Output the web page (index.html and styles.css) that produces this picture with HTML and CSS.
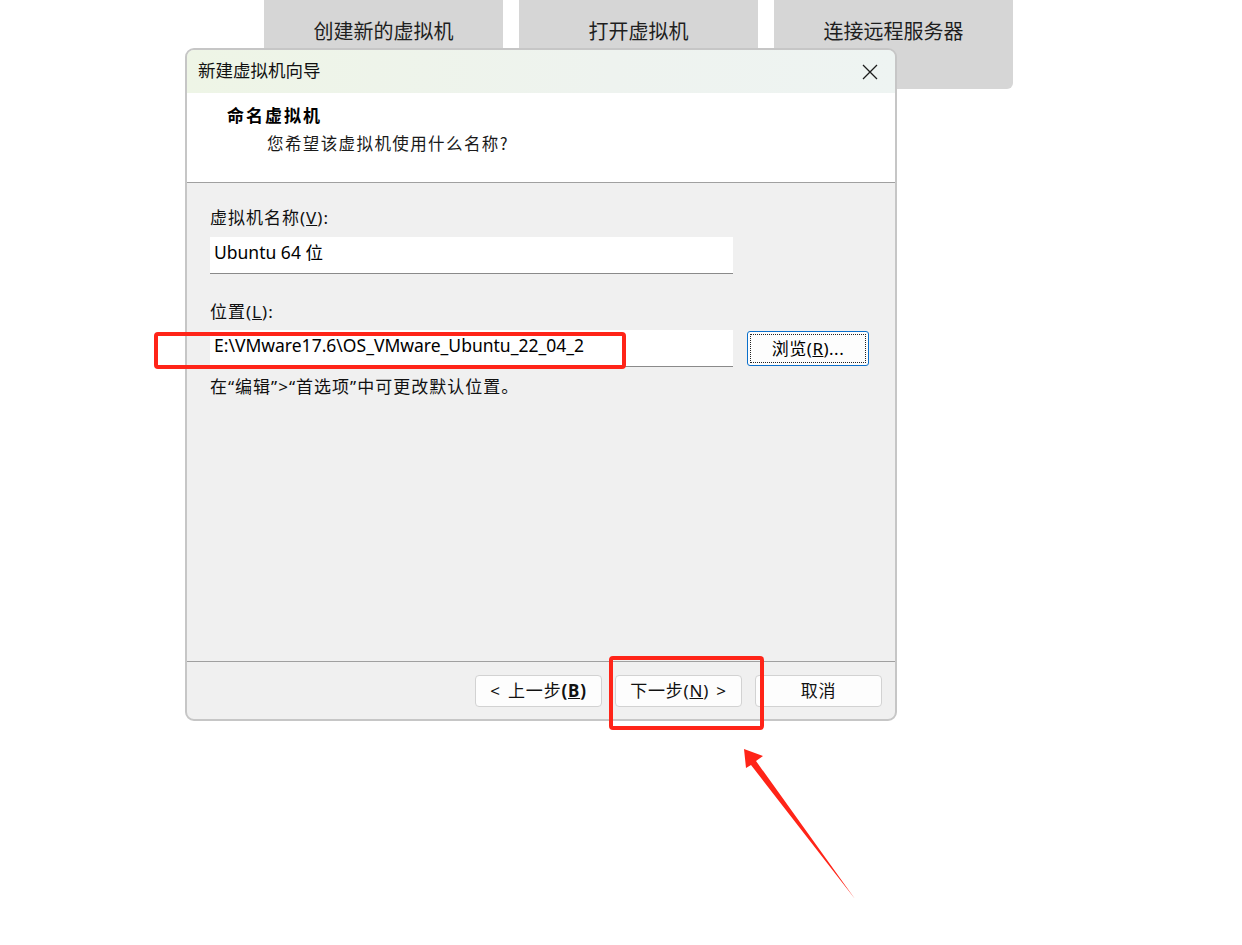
FILE: index.html
```html
<!DOCTYPE html>
<html>
  <head>
    <title>新建虚拟机向导</title>
    <link rel="stylesheet" href="styles.css">
  </head>
  <body>
    <div class="tiles">
      <div class="tile">创建新的虚拟机</div>
      <div class="tile">打开虚拟机</div>
      <div class="tile">连接远程服务器</div>
    </div>

    <div class="dialog">
      <div class="titlebar">
        <span class="title">新建虚拟机向导</span>
        <svg class="close" width="16" height="16" viewBox="0 0 16 16">
          <path d="M1 1 L15 15 M15 1 L1 15" stroke="#1c1c1c" stroke-width="1.3" fill="none"/>
        </svg>
      </div>

      <div class="head">
        <div class="head-title">命名虚拟机</div>
        <div class="head-sub">您希望该虚拟机使用什么名称?</div>
      </div>

      <div class="body">
        <div class="label">虚拟机名称(<u>V</u>):</div>
        <div class="field">Ubuntu 64 位</div>

        <div class="label second">位置(<u>L</u>):</div>
        <div class="row">
          <div class="field">E:\VMware17.6\OS_VMware_Ubuntu_22_04_2</div>
          <div class="browse"><span class="focus">浏览(<u>R</u>)...</span></div>
        </div>
        <div class="hint">在“编辑”&gt;“首选项”中可更改默认位置。</div>
      </div>

      <div class="footer">
        <div class="btn">&lt; 上一步<b>(<u>B</u>)</b></div>
        <div class="btn">下一步(<u>N</u>) &gt;</div>
        <div class="btn">取消</div>
      </div>
    </div>

    <!-- annotations drawn over the screenshot -->
    <div class="mark mark-path"></div>
    <div class="mark mark-next"></div>
    <svg class="arrow" width="1242" height="945" viewBox="0 0 1242 945">
      <polygon points="744,749 763,756 756,761 855,899 751,765 746,768" fill="#ff2418"/>
    </svg>
  </body>
</html>
```

FILE: styles.css
```css
body{
  margin: 0;
  background-color: #ffffff;
  font-family: "Noto Sans CJK SC", "Noto Sans", sans-serif;
  color: #000000;
  position: relative;
  height: 945px;
  overflow: hidden;
}

.tiles{
  display: flex;
  gap: 16px;
  padding-left: 264px;
}
.tile{
  width: 239px;
  height: 89px;
  background-color: #d6d6d6;
  border-radius: 0 0 6px 6px;
  box-sizing: border-box;
  padding-top: 17px;
  text-align: center;
  font-size: 20px;
  line-height: 28px;
  color: #1e1e1e;
}

.dialog{
  position: relative;
  margin-top: -41px;
  margin-left: 185px;
  width: 712px;
  height: 673px;
  box-sizing: border-box;
  border: 2px solid #c6c6c6;
  border-radius: 9px;
  background-color: #f0f0f0;
  overflow: hidden;
  display: flex;
  flex-direction: column;
}

.titlebar{
  height: 43px;
  box-sizing: border-box;
  display: flex;
  align-items: center;
  justify-content: space-between;
  padding: 0 17px 3px 11px;
  background: linear-gradient(to right, #eef5e6, #eef3ef 60%, #eef4f2);
}
.title{
  font-size: 17.5px;
  line-height: 24px;
  color: #111;
}
.close{
  margin-top: 3px;
}

.head{
  height: 90px;
  box-sizing: border-box;
  background-color: #ffffff;
  border-bottom: 1px solid #a0a0a0;
  padding: 10px 0 0 40px;
}
.head-title{
  font-size: 17px;
  font-weight: bold;
  letter-spacing: 2px;
  line-height: 24px;
}
.head-sub{
  margin-top: 4px;
  padding-left: 40px;
  font-size: 16.5px;
  letter-spacing: 1.4px;
  line-height: 24px;
  color: #1a1a1a;
}

.body{
  flex: 1;
  padding: 23px 0 0 23px;
}
.label{
  font-family: "Noto Sans", "Noto Sans CJK SC", sans-serif;
  font-size: 17px;
  letter-spacing: 1px;
  line-height: 24px;
  color: #111;
}
.label.second{
  margin-top: 26px;
}
.field{
  margin-top: 7px;
  width: 523px;
  height: 37px;
  box-sizing: border-box;
  background-color: #ffffff;
  border-bottom: 1px solid #8a8a8a;
  padding: 3px 0 0 4px;
  font-family: "Noto Sans", "Noto Sans CJK SC", sans-serif;
  font-size: 17.5px;
  line-height: 24px;
  color: #000;
}
.row{
  display: flex;
  align-items: flex-start;
  gap: 14px;
  margin-top: 6px;
}
.row .field{
  margin-top: 0;
}
.browse{
  margin-top: 1px;
  width: 122px;
  height: 35px;
  box-sizing: border-box;
  border: 1px solid #0a6fcb;
  border-radius: 3px;
  background-color: #fdfdfd;
  padding: 2px;
}
.focus{
  display: block;
  height: 100%;
  box-sizing: border-box;
  border: 1px dotted #222;
  text-align: center;
  font-family: "Noto Sans", "Noto Sans CJK SC", sans-serif;
  font-size: 17px;
  letter-spacing: 0.5px;
  line-height: 27px;
}
.hint{
  margin-top: 8px;
  font-family: "Noto Sans", "Noto Sans CJK SC", sans-serif;
  font-size: 17px;
  letter-spacing: 1px;
  line-height: 24px;
  color: #111;
}

.footer{
  height: 58px;
  box-sizing: border-box;
  border-top: 1px solid #a0a0a0;
  display: flex;
  justify-content: flex-end;
  gap: 13px;
  padding: 13px 13px 0 0;
}
.btn{
  width: 127px;
  height: 32px;
  box-sizing: border-box;
  border: 1px solid #d2d2d2;
  border-radius: 4px;
  background-color: #fdfdfd;
  text-align: center;
  font-family: "Noto Sans", "Noto Sans CJK SC", sans-serif;
  font-size: 17px;
  letter-spacing: 0.8px;
  word-spacing: 2px;
  line-height: 29px;
  color: #111;
}

.mark{
  position: absolute;
  border: 4px solid #ff2418;
  border-radius: 4px;
  box-sizing: border-box;
}
.mark-path{
  left: 154px;
  top: 332px;
  width: 472px;
  height: 37px;
}
.mark-next{
  left: 609px;
  top: 656px;
  width: 155px;
  height: 74px;
}
.arrow{
  position: absolute;
  left: 0;
  top: 0;
  pointer-events: none;
}
```
